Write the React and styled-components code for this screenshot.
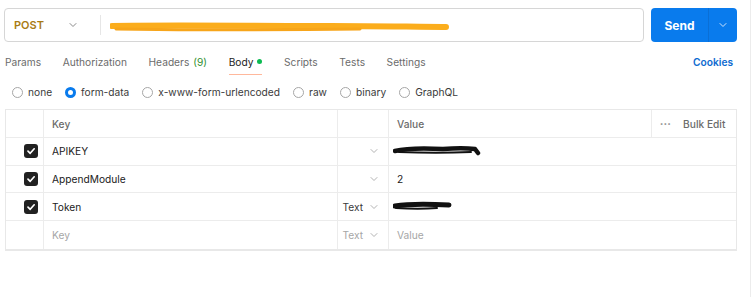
import React from "react";
import styled, { createGlobalStyle } from "styled-components";

const GlobalStyle = createGlobalStyle`
  html, body {
    margin: 0;
    padding: 0;
    background: #fff;
  }
  body {
    font-family: Inter, "Noto Sans", sans-serif;
    font-size: 10.2px;
    color: #212121;
  }
`;

const tabs = [
  { label: "Params" },
  { label: "Authorization" },
  { label: "Headers", count: 9 },
  { label: "Body", active: true, dot: true },
  { label: "Scripts" },
  { label: "Tests" },
  { label: "Settings" },
];

const bodyTypes = [
  { label: "none" },
  { label: "form-data", checked: true },
  { label: "x-www-form-urlencoded" },
  { label: "raw" },
  { label: "binary" },
  { label: "GraphQL" },
];

const rows = [
  { key: "APIKEY", type: "", value: "", blot: "long" },
  { key: "AppendModule", type: "", value: "2" },
  { key: "Token", type: "Text", value: "", blot: "short" },
];

function Chevron({ color = "#8a8a8a", size = 10 }) {
  return (
    <svg width={size} height={size} viewBox="0 0 10 10" fill="none">
      <path d="M2 3.5 L5 6.5 L8 3.5" stroke={color} strokeWidth="1" strokeLinecap="round" strokeLinejoin="round" />
    </svg>
  );
}

function Check() {
  return (
    <svg width="10" height="10" viewBox="0 0 10 10" fill="none">
      <path d="M2 5.2 L4.2 7.3 L8.2 2.8" stroke="#fff" strokeWidth="1.7" strokeLinecap="round" strokeLinejoin="round" />
    </svg>
  );
}

function Blot({ kind }) {
  if (kind === "long") {
    return (
      <svg width="88" height="14" viewBox="0 0 88 14" fill="none">
        <path d="M2 7 C10 5, 30 4, 50 5 C62 4, 74 4, 82 5 L85 9" stroke="#111" strokeWidth="4.5" strokeLinecap="round" />
        <path d="M6 8 C30 9, 56 9, 78 8" stroke="#111" strokeWidth="2" strokeLinecap="round" />
      </svg>
    );
  }
  return (
    <svg width="60" height="12" viewBox="0 0 60 12" fill="none">
      <path d="M2 5 C14 3, 36 3, 56 4" stroke="#111" strokeWidth="5" strokeLinecap="round" />
      <path d="M3 7 C18 8, 32 8, 44 7" stroke="#111" strokeWidth="2" strokeLinecap="round" />
    </svg>
  );
}

export default function App() {
  return (
    <>
      <GlobalStyle />
      <Page>
        <Content>
          <RequestBar>
            <UrlBox>
              <Method>
                POST
                <Chevron />
              </Method>
              <Divider />
              <UrlScribble>
                <svg width="345" height="14" viewBox="0 0 345 14" fill="none">
                  <path d="M2 6 C60 5, 140 6, 220 6 C270 6, 310 7, 336 7" stroke="#fbad1c" strokeWidth="6" strokeLinecap="round" />
                  <path d="M6 9 C80 10, 180 10, 250 9" stroke="#f7a51a" strokeWidth="3" strokeLinecap="round" />
                </svg>
              </UrlScribble>
            </UrlBox>
            <SendGroup>
              <SendButton>Send</SendButton>
              <SendMenu>
                <Chevron color="#cfe3fb" />
              </SendMenu>
            </SendGroup>
          </RequestBar>

          <TabBar>
            <Tabs>
              {tabs.map((t) => (
                <Tab key={t.label} $active={t.active}>
                  {t.label}
                  {t.count != null && <Count>({t.count})</Count>}
                  {t.dot && <Dot />}
                </Tab>
              ))}
            </Tabs>
            <Cookies>Cookies</Cookies>
          </TabBar>

          <RadioRow>
            {bodyTypes.map((b) => (
              <RadioItem key={b.label}>
                <Radio $checked={b.checked} />
                {b.label}
              </RadioItem>
            ))}
          </RadioRow>

          <Table>
            <HeaderRow>
              <Cell />
              <HeadCell>Key</HeadCell>
              <Cell />
              <HeadCell>Value</HeadCell>
              <BulkCell>
                <Dots>•••</Dots>
                Bulk Edit
              </BulkCell>
            </HeaderRow>
            {rows.map((r) => (
              <Row key={r.key}>
                <CheckCell>
                  <Checkbox>
                    <Check />
                  </Checkbox>
                </CheckCell>
                <TextCell>{r.key}</TextCell>
                <TypeCell>
                  <TypeLabel>{r.type}</TypeLabel>
                  <Chevron color="#b3b3b3" />
                </TypeCell>
                <ValueCell $blot={!!r.blot}>{r.blot ? <Blot kind={r.blot} /> : r.value}</ValueCell>
              </Row>
            ))}
            <Row $last>
              <CheckCell />
              <TextCell $placeholder>Key</TextCell>
              <TypeCell>
                <TypeLabel $placeholder>Text</TypeLabel>
                <Chevron color="#b3b3b3" />
              </TypeCell>
              <ValueCell $placeholder>Value</ValueCell>
            </Row>
          </Table>
        </Content>
      </Page>
    </>
  );
}

const Page = styled.div`
  width: 751px;
  height: 297px;
  border-right: 1px solid #ececec;
  box-sizing: border-box;
  overflow: hidden;
`;

const Content = styled.div`
  width: 737px;
  padding-top: 8px;
`;

const RequestBar = styled.div`
  display: flex;
  gap: 7px;
  height: 34px;
  margin-left: 4px;
`;

const UrlBox = styled.div`
  flex: 1;
  display: flex;
  align-items: center;
  border: 1px solid #d6d6d6;
  border-radius: 4px;
  box-sizing: border-box;
`;

const Method = styled.div`
  width: 85px;
  display: flex;
  align-items: center;
  justify-content: space-between;
  padding: 0 12px 0 9px;
  box-sizing: border-box;
  color: #a97b14;
  font-weight: 600;
  font-size: 11px;
`;

const Divider = styled.div`
  width: 1px;
  height: 20px;
  margin-left: 10px;
  background: #e6e6e6;
`;

const UrlScribble = styled.div`
  display: flex;
  margin-left: 9px;
  margin-top: 3px;
`;

const SendGroup = styled.div`
  display: flex;
  width: 86px;
  flex: none;
  background: #097bed;
  border-radius: 4px;
  overflow: hidden;
`;

const SendButton = styled.div`
  flex: 1;
  display: flex;
  align-items: center;
  justify-content: center;
  color: #fff;
  font-weight: 700;
  font-size: 12px;
  border-right: 1px solid #0a6fd6;
`;

const SendMenu = styled.div`
  width: 28px;
  display: flex;
  align-items: center;
  justify-content: center;
`;

const TabBar = styled.div`
  display: flex;
  align-items: flex-start;
  justify-content: space-between;
  margin-top: 9px;
  padding-left: 5px;
`;

const Tabs = styled.div`
  display: flex;
  gap: 21.6px;
`;

const Tab = styled.div`
  display: flex;
  align-items: center;
  gap: 4px;
  height: 21px;
  padding-bottom: 2px;
  color: ${(p) => (p.$active ? "#212121" : "#6b6b6b")};
  border-bottom: 1px solid ${(p) => (p.$active ? "#ffb89c" : "transparent")};
  white-space: nowrap;
`;

const Count = styled.span`
  color: #2f8f2f;
`;

const Dot = styled.span`
  width: 5px;
  height: 5px;
  border-radius: 50%;
  background: #0cbb52;
`;

const Cookies = styled.div`
  height: 21px;
  display: flex;
  align-items: center;
  padding-right: 4px;
  color: #0f6bd0;
  font-weight: 600;
`;

const RadioRow = styled.div`
  display: flex;
  align-items: center;
  gap: 13px;
  height: 20px;
  margin-top: 7px;
  padding-left: 12px;
  color: #3a3a3a;
`;

const RadioItem = styled.label`
  display: flex;
  align-items: center;
  gap: 5px;
`;

const Radio = styled.span`
  width: 11px;
  height: 11px;
  border-radius: 50%;
  box-sizing: border-box;
  border: ${(p) => (p.$checked ? "3px solid #097bed" : "1px solid #a6a6a6")};
  background: #fff;
`;

const Table = styled.div`
  width: 732px;
  box-sizing: border-box;
  margin: 7px 0 0 5px;
  border: 1px solid #e8e8e8;
  border-bottom-width: 2px;
`;

const HeaderRow = styled.div`
  display: grid;
  grid-template-columns: 38px 294px 51px 263px minmax(0, 1fr);
  height: 28px;
  border-bottom: 1px solid #ececec;
  box-sizing: border-box;
  color: #6b6b6b;
  font-weight: 500;
`;

const Row = styled.div`
  display: grid;
  grid-template-columns: 38px 294px 51px minmax(0, 1fr);
  height: 27.7px;
  border-bottom: ${(p) => (p.$last ? "none" : "1px solid #ececec")};
  box-sizing: border-box;
`;

const Cell = styled.div`
  display: flex;
  align-items: center;
  border-right: 1px solid #ececec;
`;

const HeadCell = styled(Cell)`
  padding-left: 8px;
`;

const BulkCell = styled.div`
  display: flex;
  align-items: center;
  padding-left: 8px;
  gap: 12px;
  color: #6b6b6b;
  white-space: nowrap;
`;

const Dots = styled.span`
  font-size: 6px;
  letter-spacing: 0.5px;
  color: #8a8a8a;
`;

const CheckCell = styled(Cell)`
  justify-content: flex-end;
  padding-right: 5px;
`;

const Checkbox = styled.span`
  width: 14px;
  height: 14px;
  border-radius: 3px;
  background: #212121;
  display: flex;
  align-items: center;
  justify-content: center;
`;

const TextCell = styled(Cell)`
  padding-left: 8px;
  color: ${(p) => (p.$placeholder ? "#a6a6a6" : "#212121")};
`;

const TypeCell = styled(Cell)`
  justify-content: flex-end;
  gap: 6px;
  padding-right: 9px;
`;

const TypeLabel = styled.span`
  color: ${(p) => (p.$placeholder ? "#a6a6a6" : "#3a3a3a")};
`;

const ValueCell = styled.div`
  display: flex;
  align-items: center;
  padding-left: ${(p) => (p.$blot ? 4 : 8)}px;
  color: ${(p) => (p.$placeholder ? "#a6a6a6" : "#212121")};
`;
